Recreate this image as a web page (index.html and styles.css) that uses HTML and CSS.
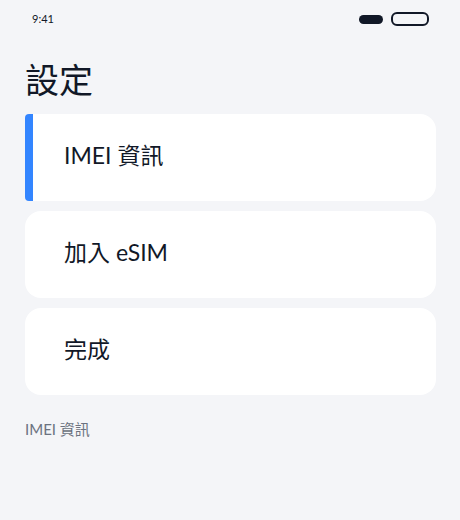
FILE: index.html
```html
<!DOCTYPE html>
<html lang="zh-Hant">
<head>
<meta charset="utf-8">
<link rel="stylesheet" href="styles.css">
</head>
<body>
<div class="screen">
  <div class="status">
    <span class="time">9:41</span>
    <div class="status-icons">
      <span class="pill-filled"></span>
      <span class="pill-outline"></span>
    </div>
  </div>
  <h1 class="title">設定</h1>
  <div class="list">
    <div class="card card-active">IMEI 資訊</div>
    <div class="card">加入 eSIM</div>
    <div class="card">完成</div>
  </div>
  <p class="caption">IMEI 資訊</p>
</div>
</body>
</html>
```
FILE: styles.css
```css
* { box-sizing: border-box; }
html, body { margin: 0; padding: 0; }
body {
  width: 460px;
  height: 520px;
  background: #f4f5f8;
  font-family: Lato, "Noto Sans CJK TC", sans-serif;
  color: #111827;
}
.screen {
  padding: 0 24px 0 25px;
}
.status {
  height: 40px;
  display: flex;
  align-items: center;
  justify-content: space-between;
  padding: 0 7px 0 7px;
}
.time {
  font-size: 11px;
  color: #111827;
  margin-top: -3px;
}
.status-icons {
  display: flex;
  align-items: center;
  gap: 8px;
  margin-top: -2px;
}
.pill-filled {
  width: 24px;
  height: 9px;
  border-radius: 5px;
  background: #111827;
}
.pill-outline {
  width: 38px;
  height: 14px;
  border-radius: 6px;
  border: 2px solid #111827;
}
.title {
  margin: 19px 0 15px 0;
  font-size: 34px;
  font-weight: 400;
  line-height: 40px;
  font-family: "Noto Sans CJK TC", sans-serif;
}
.list {
  display: flex;
  flex-direction: column;
  gap: 10px;
}
.card {
  height: 87px;
  background: #ffffff;
  border-radius: 16px;
  display: flex;
  align-items: center;
  padding-left: 39px;
  padding-bottom: 7px;
  font-size: 23px;
  color: #111827;
}
.card-active {
  border-left: 8px solid #3385ff;
  border-radius: 4px 16px 16px 4px;
  padding-left: 31px;
}
.caption {
  margin: 23px 0 0 0;
  font-size: 15px;
  color: #6b7280;
}
```
